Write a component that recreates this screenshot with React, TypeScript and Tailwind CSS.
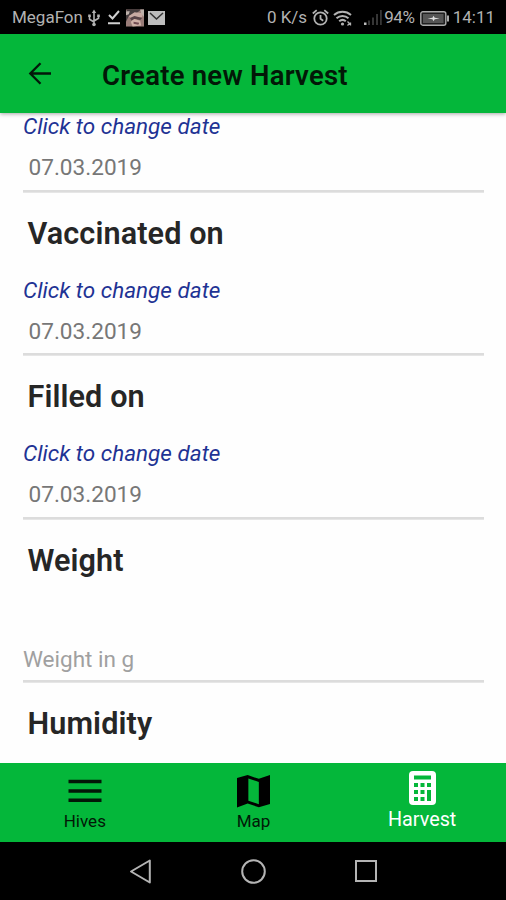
import type { ReactNode } from 'react';

function Heading({ children }: { children: ReactNode }) {
  return (
    <h2 className="h-[82px] pl-[4.5px] text-[30.6px] leading-[81.5px] font-semibold tracking-[0.1px] text-[#262626]">
      {children}
    </h2>
  );
}

function Rule() {
  return <div className="h-[3px] w-full border-b border-[#e6e6e6] bg-[#dcdcdc]" />;
}

function DateField({ value }: { value: string }) {
  return (
    <div className="h-[81.5px]">
      <div className="h-8 text-[22.5px] leading-[31.5px] text-[#1f3394] italic">Click to change date</div>
      <div className="h-[46.5px] pt-[2px] pl-[5.5px] text-[22.6px] leading-[46.5px] text-[#777]">{value}</div>
      <Rule />
    </div>
  );
}

function StatusBar() {
  return (
    <div className="flex h-[34px] shrink-0 items-center bg-black pt-[2px] pr-[11px] pl-3 text-[17px] text-[#b2b2b2]">
      <span>MegaFon</span>
      <svg className="ml-[5px] h-[18px] w-3" viewBox="0 0 12 18" fill="none" stroke="currentColor" strokeWidth="1.6">
        <path d="M6 3v12M1.5 7v3.2L6 13M10.5 7v2.2L6 12" />
        <path d="M6 .5 8.2 4H3.8Z" fill="currentColor" stroke="none" />
        <circle cx="6" cy="15.5" r="1.8" fill="currentColor" stroke="none" />
        <path d="M.2 5.5h2.6v2.6H.2zM9.2 5.5h2.6v2.6H9.2z" fill="currentColor" stroke="none" />
      </svg>
      <svg className="ml-[7px] h-4 w-3.5" viewBox="0 0 14 16" fill="none" stroke="#d0d0d0" strokeWidth="2">
        <path d="m2 5 3.5 3.5L12 1M1 13.2h12" />
      </svg>
      <svg className="ml-[5px] h-[18px] w-[18px]" viewBox="0 0 19 18">
        <path fill="#997c78" d="M0 0h19v18H0z" />
        <path fill="#443c3e" d="M2 0h14l-5 4-8 3-3 6V2z" />
        <path fill="#c7aaa3" d="m3 7 6-4 9 1-1 4-7 1-3 4z" />
        <path fill="#574348" d="m4 9 5-2 8 2-2 2-6-1-3 2z" />
        <path fill="#d0b1a8" d="m5 13 4-3 6 2 1 5-9 1z" />
        <path fill="#724c52" d="m8 13 6 1-1 2-5-1z" />
        <path fill="#bcb0aa" d="M0 2h4L3 5 0 6zM15 0h4v8l-3-4z" />
      </svg>
      <svg className="ml-[4px] h-[14px] w-[17px]" viewBox="0 0 17 14">
        <path fill="#bdbdbd" d="M0 0h17v14H0z" />
        <path d="m2 2 6.5 6L15 2" fill="none" stroke="#333" strokeWidth="1.5" />
      </svg>
      <div className="ml-auto flex items-center">
        <span>0 K/s</span>
        <svg className="ml-[5px] h-[18px] w-[17px]" viewBox="0 0 17 18" fill="none" stroke="currentColor" strokeWidth="1.8">
          <circle cx="8.5" cy="9.5" r="6.2" />
          <path d="M8.5 6v3.8l2.7 2M.8 4.5 4.7 1.1M16.2 4.5l-3.9-3.4" />
        </svg>
        <svg className="ml-[4px] h-[17px] w-[20px]" viewBox="0 0 20 17" fill="none" stroke="currentColor" strokeWidth="2">
          <path d="M1 5a13 13 0 0 1 17 0M3.5 8.2a9 9 0 0 1 12 0M6.2 11.3a5 5 0 0 1 6.6 0" />
          <circle cx="9.5" cy="14" r="1.6" fill="currentColor" stroke="none" />
          <path d="m14.5 11.5 2 2-2 2M17.5 12.5v3" strokeWidth="1.3" />
        </svg>
        <svg className="ml-[11px] h-4 w-[18px]" viewBox="0 0 18 16">
          <path fill="#bcbcbc" d="M0 12.5h2.5V15H0z" />
          <path fill="#363636" d="M4 10.5h2V15H4zM8 7.5h2V15H8zM12 4h2v11h-2zM16 0h1.8v15H16z" />
        </svg>
        <span className="ml-[2px] tracking-[-0.35px]">94%</span>
        <svg className="ml-[5px] h-[15px] w-[29px]" viewBox="0 0 29 15">
          <rect x=".8" y=".8" width="25" height="13.4" rx="2" fill="#202020" stroke="#aaa" strokeWidth="1.4" />
          <path fill="#555" d="M3 3h20.5v9H3z" />
          <path fill="#ddd" d="m7.5 7.5 5-.7 1-2 1.2 2 5 .7-5 .7-1.2 2-1-2z" />
          <path fill="#aaa" d="M27 4.5h2v6h-2z" />
        </svg>
        <span className="ml-[4px]">14:11</span>
      </div>
    </div>
  );
}

function TopBar() {
  return (
    <header className="z-10 flex h-[79px] shrink-0 items-center bg-[#04b73a] pl-[28px] shadow-[0_1px_4px_rgba(0,0,0,0.35)]">
      <svg className="h-[24px] w-[24px]" viewBox="0 0 24 24" fill="none" stroke="#03170a" strokeWidth="2.3">
        <path d="M23 11.5H2.5M12.5 1.3 2.3 11.5l10.2 10.2" />
      </svg>
      <h1 className="ml-[50px] pt-[4px] text-[27.5px] leading-none font-semibold tracking-[0.24px] text-[#021807]">
        Create new Harvest
      </h1>
    </header>
  );
}

function TabBar() {
  return (
    <nav className="grid h-[79px] shrink-0 grid-cols-3 bg-[#04b73a] text-[#021807]">
      <div className="flex flex-col items-center pt-[16px]">
        <svg className="ml-px h-[24px] w-[34px]" viewBox="0 0 34 24" fill="none" stroke="currentColor" strokeWidth="3.6">
          <path d="M.5 2.5h33M.5 12h33M.5 21.2h33" />
        </svg>
        <span className="mt-[8px] ml-px text-[17px] leading-[20px]">Hives</span>
      </div>
      <div className="flex flex-col items-center pt-[11px]">
        <svg className="ml-px h-[34px] w-[33px]" viewBox="0 0 34 34">
          <path
            fill="#000"
            fillRule="evenodd"
            d="M0 3.5 11 .5l11.5 4L34 .5v30l-11.5 3.3L11 30 0 34zM11.7 4v23l10.8 3.6V7.7z"
          />
        </svg>
        <span className="mt-[3px] ml-px text-[17px] leading-[20px]">Map</span>
      </div>
      <div className="flex flex-col items-center pt-[8px] text-white">
        <svg className="ml-px h-[34px] w-[27px]" viewBox="0 0 27 34">
          <rect width="27" height="34" rx="4" fill="#fff" />
          <path
            fill="#04b73a"
            d="M5 4.5h17v4H5zM5 12h4v4H5zM11.5 12h4v4h-4zM18 12h4v4h-4zM5 19h4v4H5zM11.5 19h4v4h-4zM5 26h4v4H5zM11.5 26h4v4h-4zM18 19h4v11h-4z"
          />
        </svg>
        <span className="mt-[3px] ml-px text-[19.8px] leading-[24px]">Harvest</span>
      </div>
    </nav>
  );
}

function SystemNav() {
  return (
    <div className="flex h-[58px] shrink-0 items-center justify-center gap-[90px] bg-black text-[#b4b4b4]">
      <svg className="h-[25px] w-[22px]" viewBox="0 0 22 25" fill="none" stroke="currentColor" strokeWidth="2" strokeLinejoin="round">
        <path d="M20.8 1.5v22L2 12.5z" />
      </svg>
      <svg className="h-[25px] w-[25px]" viewBox="0 0 25 25" fill="none" stroke="currentColor" strokeWidth="2">
        <circle cx="12.5" cy="12.5" r="11.3" />
      </svg>
      <svg className="-ml-px h-[22px] w-[22px]" viewBox="0 0 22 22" fill="none" stroke="currentColor" strokeWidth="2">
        <path d="M1 1h20v20H1z" />
      </svg>
    </div>
  );
}

export default function App() {
  return (
    <div className="flex h-[900px] w-[506px] flex-col overflow-hidden bg-white font-[Roboto,sans-serif]">
      <StatusBar />
      <TopBar />
      <main className="min-h-0 flex-1 overflow-hidden bg-[#fefefe] pr-[22px] pl-[23px]">
        <div className="-mt-[2px]">
          <DateField value="07.03.2019" />
          <Heading>Vaccinated on</Heading>
          <DateField value="07.03.2019" />
          <Heading>Filled on</Heading>
          <DateField value="07.03.2019" />
          <Heading>Weight</Heading>
          <div className="flex h-[81.5px] flex-col justify-end">
            <div className="h-[46.5px] pt-[2px] text-[22.5px] leading-[47px] text-[#a0a0a0]">Weight in g</div>
            <Rule />
          </div>
          <Heading>Humidity</Heading>
        </div>
      </main>
      <TabBar />
      <SystemNav />
    </div>
  );
}
